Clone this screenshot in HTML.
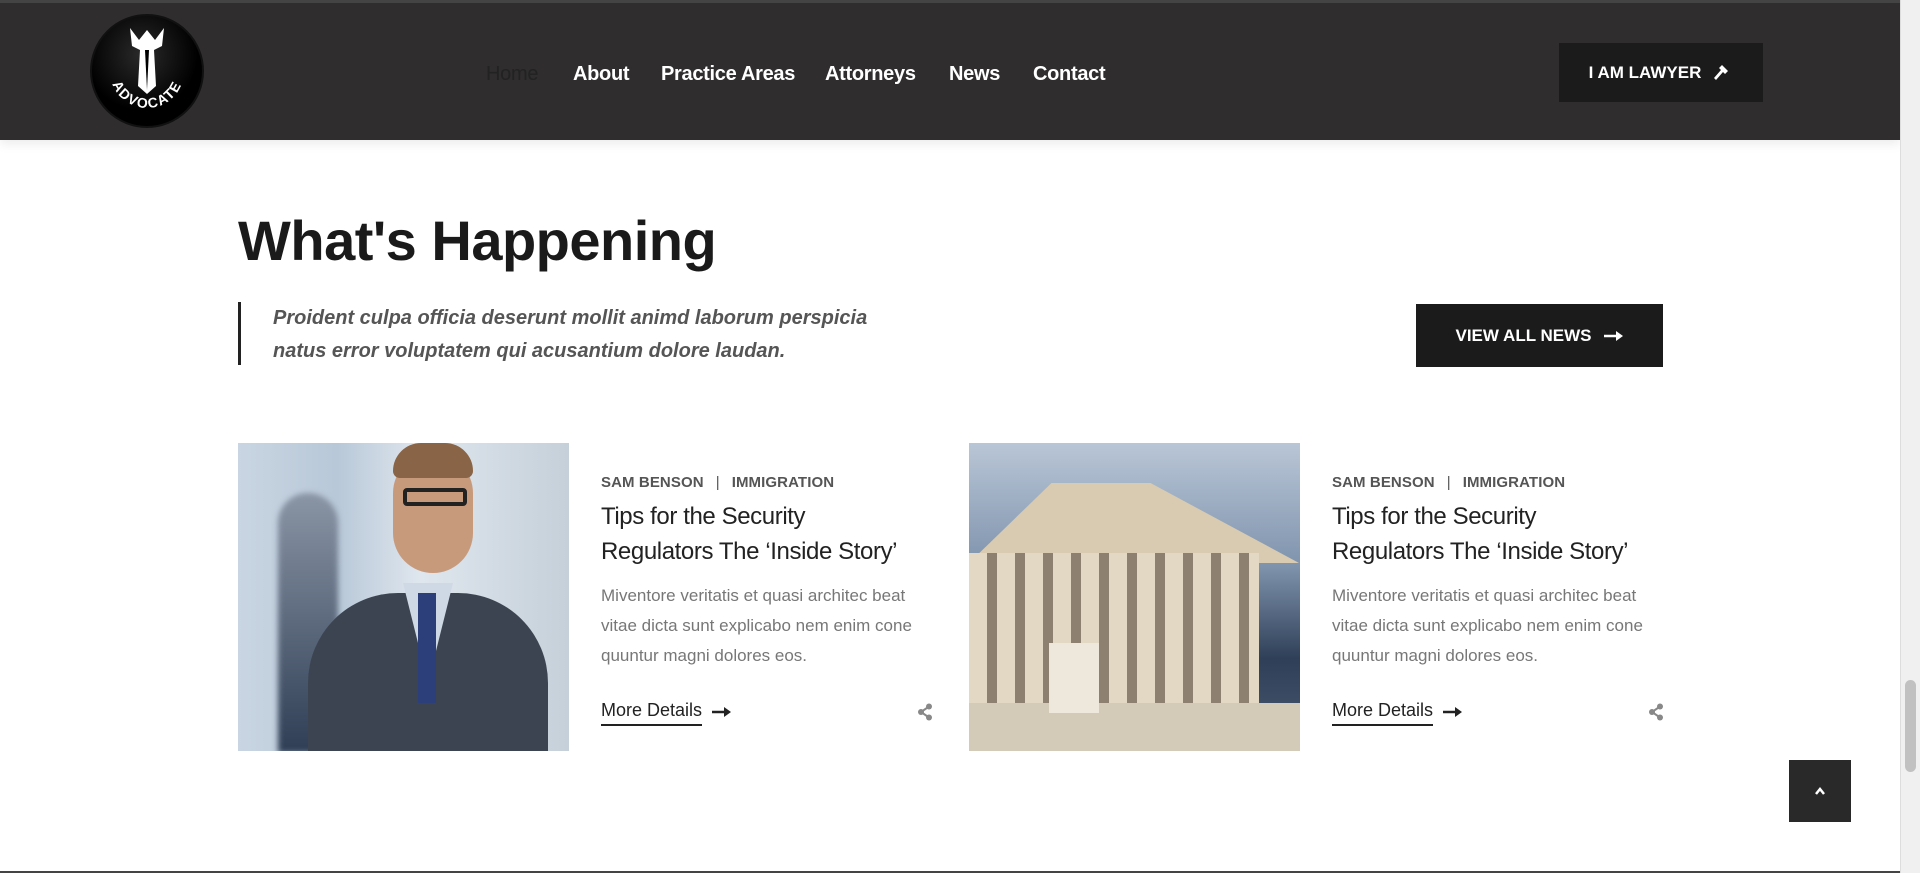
<!DOCTYPE html>
<html><head><meta charset="utf-8"><style>
*{margin:0;padding:0;box-sizing:border-box}
body{width:1920px;height:873px;overflow:hidden;background:#fff;font-family:"Liberation Sans",sans-serif;position:relative;color:#222}
.hdr{position:absolute;left:0;top:0;width:1900px;height:140px;background:#2f2d2e;border-top:3px solid #444;box-shadow:0 4px 10px rgba(0,0,0,.08)}
.sb{position:absolute;right:0;top:0;width:20px;height:873px;background:#f0f0f0;border-left:1px solid #ddd}
.sb .th{position:absolute;left:4px;top:680px;width:11px;height:92px;background:#c1c1c1;border-radius:6px}
.logo{position:absolute;left:90px;top:11px;width:114px;height:114px;border-radius:50%;background:radial-gradient(circle at 45% 35%,#2a2a2a,#000 60%);border:2px solid #111}
.nav a{position:absolute;top:60px;font-size:20px;font-weight:bold;color:#fff;text-decoration:none;letter-spacing:-.3px}
.btn{position:absolute;background:#1c1b1b;color:#fff;font-weight:bold;display:flex;align-items:center;justify-content:center;gap:12px}
h1{position:absolute;left:238px;top:208px;font-size:56px;font-weight:bold;color:#1a1a1a;letter-spacing:-.5px}
.bq{position:absolute;left:238px;top:304px;height:63px;border-left:3px solid #222;padding-left:32px;font-style:italic;font-weight:bold;font-size:20px;line-height:33px;color:#555;width:640px;margin-top:-2px}
.img{position:absolute;top:443px;width:331px;height:308px;overflow:hidden}
.txt{position:absolute;top:474px;width:330px}
.meta{font-size:15px;font-weight:bold;color:#555;letter-spacing:.1px}
.meta span{margin:0 12px;font-weight:normal}
.tt{font-size:24px;line-height:35px;color:#222;margin-top:8px;letter-spacing:-.4px;width:315px}
.ds{font-size:17px;line-height:30px;color:#777;margin-top:12px}
.md{position:absolute;top:700px;font-size:18px;color:#222;border-bottom:2px solid #222;padding-bottom:3px}
.ar{position:absolute;top:706px}
.sh{position:absolute;top:703px}
</style></head><body>
<div class="hdr">
 <div class="logo">
  <svg width="110" height="110" viewBox="0 0 110 110">
   <defs><path id="arc" d="M18 55 A37 37 0 0 0 92 55"/></defs>
   <path d="M38 12 L47 24 L55 14 L63 24 L72 12 L70 30 L62 34 L64 70 L55 78 L46 70 L48 34 L40 30Z" fill="#fff"/>
   <path d="M53 34 L55 74 L57 34Z" fill="#000"/>
   <text fill="#fff" font-size="14" font-weight="bold" font-family="Liberation Sans" letter-spacing="1.5"><textPath href="#arc" startOffset="50%" text-anchor="middle">ADVOCATE</textPath></text>
  </svg>
 </div>
 <div class="nav">
  <a style="left:486px;color:#222;font-weight:normal">Home</a>
  <a style="left:573px">About</a>
  <a style="left:661px">Practice Areas</a>
  <a style="left:825px">Attorneys</a>
  <a style="left:949px">News</a>
  <a style="left:1033px">Contact</a>
 </div>
 <div class="btn" style="left:1559px;top:40px;width:204px;height:59px;font-size:17px">I AM LAWYER
  <svg width="20" height="20" viewBox="0 0 20 20"><path d="M9 2 L15 8 L12 11 L10 9 L3 17 L1 15 L8 7 L6 5Z" fill="#fff"/></svg></div>
</div>
<div class="sb"><div class="th"></div></div>
<h1>What's Happening</h1>
<div class="bq">Proident culpa officia deserunt mollit animd laborum perspicia natus error voluptatem qui acusantium dolore laudan.</div>
<div class="btn" style="left:1416px;top:304px;width:247px;height:63px;font-size:17px">VIEW ALL NEWS <svg width="20" height="12" viewBox="0 0 20 12"><path d="M0 6 H14" stroke="#fff" stroke-width="2.5"/><path d="M12 1 L19 6 L12 11Z" fill="#fff"/></svg></div>

<div class="img" style="left:238px;background:linear-gradient(90deg,#c9d5e2 0%,#b8c8d8 30%,#dfe6ee 55%,#c5d0d9 100%)">
 <div style="position:absolute;left:40px;top:50px;width:60px;height:260px;background:linear-gradient(#8a95a5,#2f3e55);border-radius:30px 30px 0 0;filter:blur(3px)"></div>
 <div style="position:absolute;left:70px;top:150px;width:240px;height:200px;background:#3c4451;border-radius:90px 90px 0 0"></div>
 <div style="position:absolute;left:165px;top:140px;width:50px;height:100px;background:#cfd9e6;clip-path:polygon(0 0,100% 0,50% 100%)"></div>
 <div style="position:absolute;left:180px;top:150px;width:18px;height:110px;background:#2d3f7a"></div>
 <div style="position:absolute;left:155px;top:10px;width:80px;height:120px;background:#c89a7c;border-radius:40px"></div>
 <div style="position:absolute;left:155px;top:0px;width:80px;height:35px;background:#8a6446;border-radius:40px 40px 10px 10px"></div>
 <div style="position:absolute;left:165px;top:45px;width:64px;height:18px;border:4px solid #222;border-radius:4px"></div>
</div>
<div class="txt" style="left:601px">
 <div class="meta">SAM BENSON<span>|</span>IMMIGRATION</div>
 <div class="tt">Tips for the Security Regulators The ‘Inside Story’</div>
 <div class="ds">Miventore veritatis et quasi architec beat vitae dicta sunt explicabo nem enim cone quuntur magni dolores eos.</div>
</div>
<div class="md" style="left:601px">More Details</div>
<svg class="ar" style="left:712px" width="20" height="12" viewBox="0 0 20 12"><path d="M0 6 H14" stroke="#222" stroke-width="2.5"/><path d="M12 1 L19 6 L12 11Z" fill="#222"/></svg>
<svg class="sh" style="left:917px" width="16" height="18" viewBox="0 0 16 18"><circle cx="12" cy="3.5" r="3" fill="#888"/><circle cx="4" cy="9" r="3" fill="#888"/><circle cx="12" cy="14.5" r="3" fill="#888"/><path d="M12 3.5 L4 9 L12 14.5" stroke="#888" stroke-width="2" fill="none"/></svg>

<div class="img" style="left:969px;background:linear-gradient(180deg,#b9c6d6 0%,#7f93ad 40%,#2f3f58 70%,#4a5a70 100%)">
 <div style="position:absolute;left:0;top:40px;width:330px;height:80px;background:#d8cbb2;clip-path:polygon(0 100%,25% 0,55% 0,100% 100%)"></div>
 <div style="position:absolute;left:0;top:110px;width:290px;height:200px;background:repeating-linear-gradient(90deg,#e3d8c4 0 18px,#8d8070 18px 28px)"></div>
 <div style="position:absolute;left:0;top:260px;width:331px;height:48px;background:#d4cab8"></div>
 <div style="position:absolute;left:80px;top:200px;width:50px;height:70px;background:#ede7dc"></div>
</div>
<div class="txt" style="left:1332px">
 <div class="meta">SAM BENSON<span>|</span>IMMIGRATION</div>
 <div class="tt">Tips for the Security Regulators The ‘Inside Story’</div>
 <div class="ds">Miventore veritatis et quasi architec beat vitae dicta sunt explicabo nem enim cone quuntur magni dolores eos.</div>
</div>
<div class="md" style="left:1332px">More Details</div>
<svg class="ar" style="left:1443px" width="20" height="12" viewBox="0 0 20 12"><path d="M0 6 H14" stroke="#222" stroke-width="2.5"/><path d="M12 1 L19 6 L12 11Z" fill="#222"/></svg>
<svg class="sh" style="left:1648px" width="16" height="18" viewBox="0 0 16 18"><circle cx="12" cy="3.5" r="3" fill="#888"/><circle cx="4" cy="9" r="3" fill="#888"/><circle cx="12" cy="14.5" r="3" fill="#888"/><path d="M12 3.5 L4 9 L12 14.5" stroke="#888" stroke-width="2" fill="none"/></svg>

<div class="btn" style="left:1789px;top:760px;width:62px;height:62px;background:#2a292a">
 <svg width="12" height="10" viewBox="0 0 12 10"><path d="M2 8 L6 3 L10 8" stroke="#fff" stroke-width="2.5" fill="none"/></svg></div>
<div style="position:absolute;left:0;top:871px;width:1900px;height:2px;background:#444"></div>
</body></html>
